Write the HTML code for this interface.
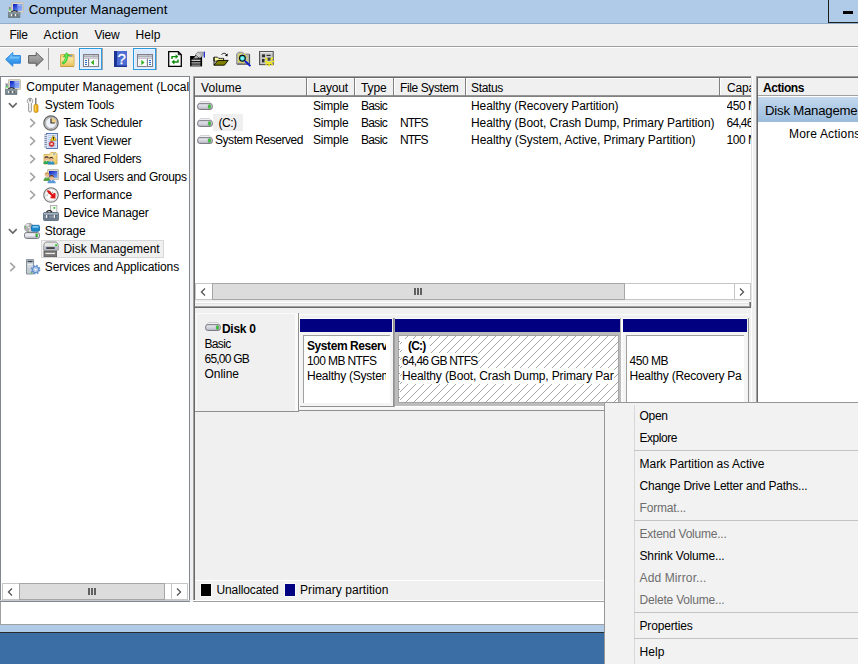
<!DOCTYPE html>
<html><head><meta charset="utf-8"><title>Computer Management</title>
<style>
html,body{margin:0;padding:0}
body{width:858px;height:664px;overflow:hidden;position:relative;background:#f0f0f0;font-family:"Liberation Sans", sans-serif;font-size:12px;color:#000}
.t{margin:0;padding:0}
</style></head><body>
<svg width="0" height="0" style="position:absolute"><defs>
<linearGradient id="gscr" x1="0" y1="0" x2="1" y2="1"><stop offset="0" stop-color="#0818c0"/><stop offset="1" stop-color="#7fb0ff"/></linearGradient>
<linearGradient id="gback" x1="0" y1="0" x2="0" y2="1"><stop offset="0" stop-color="#6cc3fb"/><stop offset="1" stop-color="#1e7fe0"/></linearGradient>
<linearGradient id="gfwd" x1="0" y1="0" x2="0" y2="1"><stop offset="0" stop-color="#b8b8b8"/><stop offset="1" stop-color="#7c7c7c"/></linearGradient>
<linearGradient id="gfold" x1="0" y1="0" x2="0" y2="1"><stop offset="0" stop-color="#fbe9a8"/><stop offset="1" stop-color="#e8c25a"/></linearGradient>
<linearGradient id="ghelp" x1="0" y1="0" x2="1" y2="0"><stop offset="0" stop-color="#5a7fe0"/><stop offset="1" stop-color="#1c3fb0"/></linearGradient>
<linearGradient id="gdrv" x1="0" y1="0" x2="0" y2="1"><stop offset="0" stop-color="#ececf4"/><stop offset="1" stop-color="#bcbcc8"/></linearGradient>
<linearGradient id="gsel" x1="0" y1="0" x2="0" y2="1"><stop offset="0" stop-color="#c4d9ee"/><stop offset="1" stop-color="#9bbbdd"/></linearGradient>
</defs></svg>
<div style="position:absolute;left:0px;top:0px;width:858px;height:23px;background:#b0cbe8;"></div>
<div style="position:absolute;left:0px;top:23px;width:858px;height:1px;background:#94adc9;"></div>
<svg style="position:absolute;left:8px;top:2px" width="16" height="16" viewBox="0 0 16 16"><rect x="0.5" y="4.5" width="3" height="6" fill="#e4e4e4" stroke="#b8b8c0" stroke-width="0.6"/><rect x="1.2" y="5.2" width="1.4" height="1.6" fill="#505070"/><rect x="0.9" y="7.2" width="2.2" height="1.3" fill="#38d838"/><rect x="3.5" y="0.5" width="12" height="10" rx="0.6" fill="#dcd8c8" stroke="#c0bcac" stroke-width="0.8"/><rect x="5" y="2" width="9.2" height="7" fill="url(#gscr)"/><path d="M8.8 2 L14.2 2 L14.2 9 L10.2 9 Z" fill="#9ab4ff" opacity="0.6"/><path d="M10 2.6 L13.6 2.6 L13.6 4 L10.3 4 Z" fill="#fff" opacity="0.35"/><path d="M3.5 10.2 C4 8.2 9 8.2 9.5 10.2" fill="none" stroke="#181818" stroke-width="1.1"/><rect x="0.3" y="10.2" width="11.7" height="5.5" fill="#6f7f86" stroke="#5a6a70" stroke-width="0.5"/><rect x="0.6" y="10.5" width="11.1" height="1" fill="#9aa8ae"/><rect x="0.6" y="12.6" width="11.1" height="0.9" fill="#93a1a8"/><rect x="3" y="12" width="1.6" height="2.2" fill="#f0f0f0"/><rect x="4.6" y="12" width="0.8" height="2.2" fill="#303030"/><rect x="7" y="12" width="1.6" height="2.2" fill="#f0f0f0"/><rect x="8.6" y="12" width="0.8" height="2.2" fill="#303030"/></svg>
<div style="position:absolute;left:828px;top:0px;width:1px;height:23px;background:#1e1e1e;"></div>
<div style="position:absolute;left:828px;top:22px;width:30px;height:1px;background:#1e1e1e;"></div>
<div style="position:absolute;left:843px;top:11px;width:10px;height:3px;background:#000;"></div>
<div style="position:absolute;left:0px;top:24px;width:858px;height:22px;background:#f0f0f0;"></div>
<div style="position:absolute;left:0px;top:46px;width:858px;height:1px;background:#a0a0a0;"></div>
<div style="position:absolute;left:0px;top:47px;width:858px;height:1px;background:#ffffff;"></div>
<div style="position:absolute;left:0px;top:48px;width:858px;height:28px;background:#f0f0f0;"></div>
<svg style="position:absolute;left:5px;top:51px" width="16" height="16" viewBox="0 0 16 16"><path d="M0.7 8.4 L7.8 1.6 L7.8 4.6 L15.4 4.6 L15.4 12.2 L7.8 12.2 L7.8 15.2 Z" fill="url(#gback)" stroke="#2a86e0" stroke-width="1" stroke-linejoin="round"/><path d="M3 8.4 L7 4.6 L7 6 L14 6 L14 7.6 L4 7.6 Z" fill="#8fd4ff" opacity="0.55"/></svg>
<svg style="position:absolute;left:28px;top:51px" width="16" height="16" viewBox="0 0 16 16"><path d="M15.3 8.4 L8.2 1.6 L8.2 4.6 L0.6 4.6 L0.6 12.2 L8.2 12.2 L8.2 15.2 Z" fill="url(#gfwd)" stroke="#5c5c5c" stroke-width="1" stroke-linejoin="round"/></svg>
<div style="position:absolute;left:48px;top:48px;width:1px;height:22px;background:#a0a0a0;"></div>
<svg style="position:absolute;left:60px;top:52px" width="16" height="16" viewBox="0 0 16 16"><rect x="0.5" y="2.5" width="13.5" height="12" rx="0.8" fill="#f3d077" stroke="#cda646" stroke-width="0.9"/><rect x="1" y="5.6" width="12.5" height="8.6" fill="url(#gfold)"/><rect x="0.5" y="14" width="13.5" height="0.9" fill="#c09a3c"/><rect x="9.8" y="3.3" width="2.6" height="1.2" rx="0.5" fill="#4a8ae8"/><path d="M2 10.6 C4.3 9.6 5.3 7.2 5.2 4.6 L3.3 4.9 L6.4 0.7 L10 4 L7.7 4.2 C7.9 8 5.6 11.4 3 12.2 Z" fill="#3ad43a" stroke="#2cb82c" stroke-width="0.5"/><path d="M6.3 2.2 C6.6 5 6 8 4 10.4" fill="none" stroke="#86f472" stroke-width="0.9"/></svg>
<div style="position:absolute;left:79px;top:48px;width:23px;height:22px;background:#dce9fa;border:1px solid #2a9be0;box-sizing:border-box;box-shadow:inset 0 0 0 1px #e8f1fc"></div>
<div style="position:absolute;left:102px;top:48px;width:1px;height:22px;background:#a8a8a8;"></div>
<svg style="position:absolute;left:83px;top:54px" width="16" height="13" viewBox="0 0 16 13"><rect x="0.5" y="0.5" width="15" height="12" fill="#fff" stroke="#80808a"/><rect x="1" y="1" width="14" height="3.6" fill="#9a9aa4"/><rect x="1.2" y="1.4" width="9.5" height="0.9" fill="#e4e4ea"/><rect x="11.6" y="1.3" width="1.1" height="1.1" fill="#fff"/><rect x="13.4" y="1.3" width="1.1" height="1.1" fill="#fff"/><rect x="1" y="3.2" width="14" height="0.9" fill="#e0e0e6"/><rect x="5" y="4.6" width="1" height="7.9" fill="#80808a"/><rect x="6" y="4.6" width="0.6" height="7.9" fill="#d8d8e0"/><rect x="2" y="5.9" width="2" height="1.1" fill="#2f6fd0"/><rect x="2" y="7.9" width="2" height="1.1" fill="#2f6fd0"/><rect x="2" y="9.9" width="2" height="1.1" fill="#2f6fd0"/><path d="M11 5.7 L11 11.3 L7.8 8.5 Z" fill="#34b020"/><rect x="12.5" y="5" width="2" height="7" fill="#f0f0f0"/></svg>
<svg style="position:absolute;left:114px;top:51px" width="13" height="16" viewBox="0 0 13 16"><rect x="0" y="0" width="13" height="16" fill="#4c6cd4"/><rect x="0" y="0" width="3" height="16" fill="#1c3494"/><rect x="0" y="14.5" width="13" height="1.5" fill="#1c3494"/><text x="7.6" y="13.2" text-anchor="middle" font-family="Liberation Sans, sans-serif" font-size="15" fill="#fff" stroke="#fff" stroke-width="0.3">?</text></svg>
<div style="position:absolute;left:133px;top:48px;width:23px;height:22px;background:#dce9fa;border:1px solid #2a9be0;box-sizing:border-box;box-shadow:inset 0 0 0 1px #e8f1fc"></div>
<div style="position:absolute;left:156px;top:48px;width:1px;height:22px;background:#a8a8a8;"></div>
<svg style="position:absolute;left:137px;top:54px" width="16" height="13" viewBox="0 0 16 13"><rect x="0.5" y="0.5" width="15" height="12" fill="#fff" stroke="#80808a"/><rect x="1" y="1" width="14" height="3.6" fill="#9a9aa4"/><rect x="1.2" y="1.4" width="9.5" height="0.9" fill="#e4e4ea"/><rect x="11.6" y="1.3" width="1.1" height="1.1" fill="#fff"/><rect x="13.4" y="1.3" width="1.1" height="1.1" fill="#fff"/><rect x="1" y="3.2" width="14" height="0.9" fill="#e0e0e6"/><rect x="10" y="4.6" width="1" height="7.9" fill="#80808a"/><rect x="9.4" y="4.6" width="0.6" height="7.9" fill="#d8d8e0"/><rect x="12" y="5.9" width="2" height="1.1" fill="#2f6fd0"/><rect x="12" y="7.9" width="2" height="1.1" fill="#2f6fd0"/><rect x="12" y="9.9" width="2" height="1.1" fill="#2f6fd0"/><path d="M4.3 5.7 L4.3 11.3 L7.5 8.5 Z" fill="#34b020"/><rect x="1.5" y="5" width="2" height="7" fill="#f0f0f0"/></svg>
<svg style="position:absolute;left:168px;top:51px" width="14" height="16" viewBox="0 0 14 16"><path d="M0.7 0.7 L10.3 0.7 L13.3 3.7 L13.3 15.3 L0.7 15.3 Z" fill="#fff" stroke="#000" stroke-width="1.3"/><path d="M10.3 0.7 L10.3 3.7 L13.3 3.7" fill="none" stroke="#000" stroke-width="1"/><path d="M4 8 L4 5.6 L8 5.6" fill="none" stroke="#0a8a0a" stroke-width="1.4"/><path d="M7.6 3.2 L10.4 5.6 L7.6 8 Z" fill="#0a8a0a"/><path d="M10 8.6 L10 11 L6 11" fill="none" stroke="#0a8a0a" stroke-width="1.4"/><path d="M6.4 8.6 L3.6 11 L6.4 13.4 Z" fill="#0a8a0a"/></svg>
<svg style="position:absolute;left:189px;top:51px" width="17" height="16" viewBox="0 0 16 16"><rect x="0.6" y="5" width="12" height="10.4" fill="#000"/><rect x="2" y="8.6" width="9" height="1.5" fill="#c8c8c8"/><rect x="2" y="11.3" width="9" height="1.2" fill="#c8c8c8"/><rect x="2" y="13.6" width="9" height="1" fill="#c8c8c8"/><path d="M3.5 7.6 L7 3.4 L9.4 7.2" fill="#b0b0b0" stroke="#000" stroke-width="0.8"/><path d="M6 3.4 L8.2 1.2 L13.6 1.2 L13.6 4.6 L10.4 7.2 Z" fill="#b4b4b4" stroke="#6a6a6a" stroke-width="0.6"/><path d="M7 3 L9.6 6.4 M8.2 2 L10.8 5.4" stroke="#fff" stroke-width="0.7"/><rect x="14.2" y="0.6" width="1.2" height="6" fill="#1020c8"/></svg>
<svg style="position:absolute;left:213px;top:51px" width="16" height="16" viewBox="0 0 16 16"><path d="M1 6.2 L4.6 6.2 L5.6 7.4 L10.6 7.4 L10.6 10 L1 10 Z" fill="#ffff66" stroke="#000" stroke-width="0.9"/><path d="M1.8 7.2h1M3.8 7.2h1M2.8 8.2h1M4.8 8.2h1M6.8 8.2h1M8.8 8.2h1M1.8 9.2h1M3.8 9.2h1M5.8 9.2h1" stroke="#fff" stroke-width="0.9"/><path d="M1 6.2 L1 14.2 L11.4 14.2 L15.2 9.4 L4.8 9.4 L1 14.2" fill="#808000" stroke="#000" stroke-width="0.9" stroke-linejoin="round"/><path d="M8.6 3.6 C10 1.8 12.4 1.8 13.8 4" fill="none" stroke="#000" stroke-width="0.9"/><path d="M14.8 2.4 L14.4 5.6 L11.8 4.6 Z" fill="#000"/></svg>
<svg style="position:absolute;left:236px;top:51px" width="16" height="16" viewBox="0 0 16 16"><path d="M0.6 3 L2.4 1.2 L6.6 1.2 L8.4 3 L13.4 3 L13.4 13 L0.6 13 Z" fill="#b4b4b4" stroke="#7a7a7a" stroke-width="0.7"/><path d="M1 13.2 L13.6 13.2 L13.6 3.4" fill="none" stroke="#505050" stroke-width="1"/><path d="M2 3.4h1.2M4.4 2.6h1.2M2 5.8h1.2M2 8.2h1.2M2 10.6h1.2M4.4 11.4h1.2M6.8 11.8h1.2M9.6 5h1.2M10.8 7h1.2M10.4 9.4h1.2M8 3.4h1.2M3.2 4.6h1M3 9.4h1M9 10.6h1" stroke="#f8f020" stroke-width="1.1"/><circle cx="6.4" cy="7.3" r="2.9" fill="#30e8e8" stroke="#101010" stroke-width="1.1"/><circle cx="6.4" cy="7.3" r="1.5" fill="#90f4f4"/><path d="M9 9.8 L14.4 15.2" stroke="#0818d0" stroke-width="1.9"/></svg>
<svg style="position:absolute;left:259px;top:51px" width="16" height="16" viewBox="0 0 16 16"><rect x="0.6" y="0.6" width="13.6" height="13" fill="#c8c8c8" stroke="#505050" stroke-width="1.1"/><rect x="1.2" y="1.2" width="12.4" height="1" fill="#f0f0f0"/><rect x="3" y="3.4" width="3" height="2.8" fill="#303030"/><rect x="7.6" y="3.8" width="4" height="1.2" fill="#303030"/><rect x="3" y="8" width="2.6" height="3.4" fill="#303030"/><rect x="8.4" y="6.6" width="3.2" height="3" fill="#404040"/><path d="M6.2 6.8 L8.4 8.6 M13.8 6.6 L11.8 8.8 M5.6 10.6 L8.2 10.4 M15.4 10.6 L12.4 10.4 M6.6 13.8 L8.8 11.8 M13.6 14 L11.6 11.8 M10 15.6 L10.1 12.4" stroke="#f4ec10" stroke-width="1.5"/><path d="M8 10.6 L9.2 12 L10.2 11.2 L11.2 12 L12.4 10.6" fill="none" stroke="#f4ec10" stroke-width="1.2"/></svg>
<div style="position:absolute;left:0px;top:76px;width:190px;height:526px;background:#fff;border:1px solid #828790;box-sizing:border-box"></div>
<svg style="position:absolute;left:5px;top:79px" width="16" height="16" viewBox="0 0 16 16"><rect x="0.5" y="4.5" width="3" height="6" fill="#e4e4e4" stroke="#b8b8c0" stroke-width="0.6"/><rect x="1.2" y="5.2" width="1.4" height="1.6" fill="#505070"/><rect x="0.9" y="7.2" width="2.2" height="1.3" fill="#38d838"/><rect x="3.5" y="0.5" width="12" height="10" rx="0.6" fill="#dcd8c8" stroke="#c0bcac" stroke-width="0.8"/><rect x="5" y="2" width="9.2" height="7" fill="url(#gscr)"/><path d="M8.8 2 L14.2 2 L14.2 9 L10.2 9 Z" fill="#9ab4ff" opacity="0.6"/><path d="M10 2.6 L13.6 2.6 L13.6 4 L10.3 4 Z" fill="#fff" opacity="0.35"/><path d="M3.5 10.2 C4 8.2 9 8.2 9.5 10.2" fill="none" stroke="#181818" stroke-width="1.1"/><rect x="0.3" y="10.2" width="11.7" height="5.5" fill="#6f7f86" stroke="#5a6a70" stroke-width="0.5"/><rect x="0.6" y="10.5" width="11.1" height="1" fill="#9aa8ae"/><rect x="0.6" y="12.6" width="11.1" height="0.9" fill="#93a1a8"/><rect x="3" y="12" width="1.6" height="2.2" fill="#f0f0f0"/><rect x="4.6" y="12" width="0.8" height="2.2" fill="#303030"/><rect x="7" y="12" width="1.6" height="2.2" fill="#f0f0f0"/><rect x="8.6" y="12" width="0.8" height="2.2" fill="#303030"/></svg>
<svg style="position:absolute;left:8px;top:102px" width="10" height="7" viewBox="0 0 10 7"><path d="M0.9 1.1 L4.8 5 L8.7 1.1" fill="none" stroke="#666666" stroke-width="1.6"/></svg>
<svg style="position:absolute;left:25px;top:97px" width="16" height="16" viewBox="0 0 16 16"><path d="M4.6 1.2 C2 1.8 1.6 5.2 3.6 6.6 L3.6 14 C3.6 15.4 6.4 15.4 6.4 14 L6.4 6.6 C8.4 5.2 8 1.8 5.6 1.2 L5.6 4.2 L4.6 4.2 Z" fill="#f4f4f4" stroke="#8c8c8c" stroke-width="0.9"/><rect x="10.2" y="0.8" width="1.2" height="7" fill="#606060"/><rect x="9" y="7.4" width="4" height="8" rx="1.4" fill="#f2b21a" stroke="#b87c00" stroke-width="0.7"/><rect x="9.8" y="8.2" width="1" height="6" fill="#ffd86a"/></svg>
<svg style="position:absolute;left:29px;top:118px" width="7" height="10" viewBox="0 0 7 10"><path d="M1.2 0.9 L5.6 5 L1.2 9.1" fill="none" stroke="#a3a3a3" stroke-width="1.6"/></svg>
<svg style="position:absolute;left:43px;top:115px" width="16" height="16" viewBox="0 0 16 16"><circle cx="8" cy="8" r="7.2" fill="#c4c4c4" stroke="#666666" stroke-width="1.2"/><circle cx="8" cy="8" r="5.5" fill="#eef2f8" stroke="#9a9a9a" stroke-width="0.7"/><path d="M8 8 L8 2.7 A5.3 5.3 0 0 1 13.3 8 Z" fill="#f0cf88"/><path d="M8 3.6 L8 8.4 M7.6 8 L11.8 8" fill="none" stroke="#303030" stroke-width="1.2"/></svg>
<svg style="position:absolute;left:29px;top:136px" width="7" height="10" viewBox="0 0 7 10"><path d="M1.2 0.9 L5.6 5 L1.2 9.1" fill="none" stroke="#a3a3a3" stroke-width="1.6"/></svg>
<svg style="position:absolute;left:43px;top:133px" width="16" height="16" viewBox="0 0 16 16"><rect x="3.5" y="0.5" width="11" height="15" fill="#dbe6fa" stroke="#4a6ab0" stroke-width="0.9"/><path d="M5 2.5h8M5 4.5h8M5 6.5h8M5 8.5h8M5 10.5h8M5 12.5h8M5 14h8" stroke="#a4b8e0" stroke-width="0.6"/><rect x="1.4" y="1.2" width="2.6" height="13.6" fill="#8090b0"/><path d="M1 2.5h3.4M1 4.5h3.4M1 6.5h3.4M1 8.5h3.4M1 10.5h3.4M1 12.5h3.4M1 14h3.4" stroke="#e8ecf4" stroke-width="0.8"/><path d="M10.4 2.4 L13.4 7.4 L7.4 7.4 Z" fill="#ffd820" stroke="#a08000" stroke-width="0.6"/><rect x="9.95" y="4" width="0.9" height="1.8" fill="#000"/><rect x="9.95" y="6.2" width="0.9" height="0.7" fill="#000"/><circle cx="8.6" cy="11" r="2.5" fill="#e03030" stroke="#a01818" stroke-width="0.5"/><path d="M7.5 9.9l2.2 2.2M9.7 9.9l-2.2 2.2" stroke="#fff" stroke-width="0.9"/></svg>
<svg style="position:absolute;left:29px;top:154px" width="7" height="10" viewBox="0 0 7 10"><path d="M1.2 0.9 L5.6 5 L1.2 9.1" fill="none" stroke="#a3a3a3" stroke-width="1.6"/></svg>
<svg style="position:absolute;left:43px;top:151px" width="16" height="16" viewBox="0 0 16 16"><path d="M1 3.5 L6.4 3.5 L7.8 1.6 L13 1.6 L14 2.6 L14 13 L1 13 Z" fill="url(#gfold)" stroke="#d2ae50" stroke-width="0.9"/><rect x="10" y="2.4" width="2.4" height="1" rx="0.4" fill="#5a96ec"/><path d="M0.3999999999999999 13.0 C0.3999999999999999 8.200000000000001 6.800000000000001 8.200000000000001 6.800000000000001 13.0 Z" fill="#2ea45c"/><path d="M2.6 9.0 L3.6 11.0 L4.6 9.0 Z" fill="#fff"/><circle cx="3.6" cy="7.2" r="2.2" fill="#e8b890"/><path d="M1.4 7.5 A2.2 2.2 0 0 1 5.800000000000001 7.5 C4.48 6.1 2.7199999999999998 6.1 1.4 7.5 Z" fill="#2a2218"/><path d="M4.799999999999999 13.4 C4.799999999999999 8.8 11.6 8.8 11.6 13.4 Z" fill="#2e90c4"/><path d="M7.199999999999999 9.6 L8.2 11.6 L9.2 9.6 Z" fill="#fff"/><circle cx="8.2" cy="7.8" r="2.2" fill="#e8b890"/><path d="M5.999999999999999 8.1 A2.2 2.2 0 0 1 10.399999999999999 8.1 C9.08 6.699999999999999 7.319999999999999 6.699999999999999 5.999999999999999 8.1 Z" fill="#2a2218"/></svg>
<svg style="position:absolute;left:29px;top:172px" width="7" height="10" viewBox="0 0 7 10"><path d="M1.2 0.9 L5.6 5 L1.2 9.1" fill="none" stroke="#a3a3a3" stroke-width="1.6"/></svg>
<svg style="position:absolute;left:43px;top:169px" width="16" height="16" viewBox="0 0 16 16"><rect x="4.5" y="0.5" width="11" height="10" rx="0.6" fill="#dcd8c8" stroke="#b4b0a0" stroke-width="0.8"/><rect x="6" y="2" width="8.4" height="7" fill="url(#gscr)"/><path d="M0.5 11.899999999999999 C0.5 6.699999999999999 7.5 6.699999999999999 7.5 11.899999999999999 Z" fill="#58a448"/><path d="M3 7.499999999999999 L4 9.5 L5 7.499999999999999 Z" fill="#fff"/><circle cx="4" cy="5.6" r="2.3" fill="#e8b890"/><path d="M1.7000000000000002 5.8999999999999995 A2.3 2.3 0 0 1 6.3 5.8999999999999995 C4.92 4.449999999999999 3.08 4.449999999999999 1.7000000000000002 5.8999999999999995 Z" fill="#c8a048"/><path d="M4.3999999999999995 14.299999999999999 C4.3999999999999995 9.5 12.8 9.5 12.8 14.299999999999999 Z" fill="#5a98d8"/><path d="M7.6 10.299999999999999 L8.6 12.299999999999999 L9.6 10.299999999999999 Z" fill="#fff"/><circle cx="8.6" cy="8.2" r="2.5" fill="#e8b890"/><path d="M6.1 8.5 A2.5 2.5 0 0 1 11.1 8.5 C9.6 6.949999999999999 7.6 6.949999999999999 6.1 8.5 Z" fill="#4a3424"/></svg>
<svg style="position:absolute;left:29px;top:190px" width="7" height="10" viewBox="0 0 7 10"><path d="M1.2 0.9 L5.6 5 L1.2 9.1" fill="none" stroke="#a3a3a3" stroke-width="1.6"/></svg>
<svg style="position:absolute;left:43px;top:187px" width="16" height="16" viewBox="0 0 16 16"><circle cx="8" cy="8" r="7.2" fill="#fdfdfd" stroke="#7e7e7e" stroke-width="1.3"/><circle cx="8" cy="8" r="5.9" fill="none" stroke="#dcdcdc" stroke-width="0.9"/><path d="M4 8.6 A4.2 4.2 0 0 1 12 7.4" fill="none" stroke="#5a9070" stroke-width="1.2" stroke-dasharray="1 1.3"/><path d="M3.6 3.6 L6 3.2 L10.2 7.6 L10.6 5.8 L12.6 6.4 L12.4 11.6 L7.6 11.2 L7.4 9.4 L9 9.4 L4.6 5.2 Z" fill="#e01414"/></svg>
<svg style="position:absolute;left:43px;top:205px" width="16" height="16" viewBox="0 0 16 16"><rect x="7.5" y="0.5" width="6.4" height="8" fill="#f8f8f8" stroke="#a0a0a0" stroke-width="0.8"/><rect x="10.4" y="2" width="1.8" height="1.8" fill="#38c838"/><path d="M3.6 7.6 C4 5 8.6 5 9 7.6" fill="none" stroke="#202020" stroke-width="1.3"/><rect x="0.5" y="7.5" width="15" height="8" rx="1" fill="#6c7c8c" stroke="#556474" stroke-width="0.8"/><rect x="1" y="8" width="14" height="1.6" fill="#a4b4c2"/><rect x="1" y="11.4" width="14" height="1" fill="#8c9cac"/><rect x="3" y="10" width="1.6" height="3" fill="#f0f0f0"/><rect x="4.6" y="10" width="0.8" height="3" fill="#303840"/><rect x="10.8" y="10" width="1.6" height="3" fill="#f0f0f0"/><rect x="12.4" y="10" width="0.8" height="3" fill="#303840"/></svg>
<svg style="position:absolute;left:8px;top:228px" width="10" height="7" viewBox="0 0 10 7"><path d="M0.9 1.1 L4.8 5 L8.7 1.1" fill="none" stroke="#666666" stroke-width="1.6"/></svg>
<svg style="position:absolute;left:24px;top:223px" width="16" height="16" viewBox="0 0 16 16"><ellipse cx="5" cy="4.6" rx="4.6" ry="4.2" fill="#b4b4b4" stroke="#8a8a8a" stroke-width="0.8"/><path d="M5 4.6 L1.2 2.4 A4.6 4.2 0 0 1 5 0.4 Z" fill="#e4e4e4"/><path d="M5 4.6 L8.8 6.8 A4.6 4.2 0 0 1 5 8.8 Z" fill="#d8d8d8"/><circle cx="5" cy="4.6" r="1.3" fill="#f4f4f4" stroke="#808080" stroke-width="0.5"/><rect x="1" y="3" width="1.2" height="1.2" fill="#50c050"/><rect x="7.5" y="2.3" width="8" height="6" rx="1.2" fill="#1c8acc" stroke="#1068a4" stroke-width="0.8"/><rect x="8.6" y="3.1" width="5.8" height="1.6" fill="#8cd0f4"/><rect x="0.6" y="9.6" width="14.8" height="5.8" rx="1.8" fill="#ececf2" stroke="#70707a" stroke-width="1"/><rect x="1.4" y="13.4" width="13.2" height="1.4" rx="0.7" fill="#b8b8c4"/><rect x="11.8" y="10.8" width="1.8" height="3.2" fill="#28c828" stroke="#4a8a4a" stroke-width="0.4"/></svg>
<div style="position:absolute;left:41px;top:240px;width:123px;height:18px;background:#f0f0f0;border:1px solid #d8d8d8;box-sizing:border-box"></div>
<svg style="position:absolute;left:43px;top:241px" width="16" height="16" viewBox="0 0 16 16"><path d="M3.4 1 L12.6 1 C14 1 15.2 3 15.2 5 L15.2 9 L0.8 9 L0.8 5 C0.8 3 2 1 3.4 1 Z" fill="#e6e6e6" stroke="#808080" stroke-width="0.9"/><rect x="1.3" y="5.2" width="13.4" height="3.4" fill="#bcbcbc"/><rect x="4" y="6.4" width="7" height="1.3" fill="#101010"/><rect x="3" y="6.4" width="1" height="1.3" fill="#2040d0"/><rect x="11" y="6.4" width="1" height="1.3" fill="#2040d0"/><rect x="12.2" y="3.2" width="1.8" height="1.8" fill="#28d028"/><rect x="1" y="10" width="12.6" height="5.6" fill="#787878" stroke="#5a5a5a" stroke-width="0.8"/><rect x="2.4" y="11.8" width="9.6" height="1.3" fill="#e8e8e8"/></svg>
<svg style="position:absolute;left:9px;top:262px" width="7" height="10" viewBox="0 0 7 10"><path d="M1.2 0.9 L5.6 5 L1.2 9.1" fill="none" stroke="#a3a3a3" stroke-width="1.6"/></svg>
<svg style="position:absolute;left:25px;top:259px" width="16" height="16" viewBox="0 0 16 16"><path d="M1.5 0.6 L8.6 0.6 L8.6 15 L1.5 15 Z" fill="#c4ccd4" stroke="#7c8690" stroke-width="0.9"/><rect x="2.6" y="1.8" width="5" height="1.4" fill="#38424c"/><rect x="2.4" y="4.8" width="5.4" height="1.6" fill="#e8ecf0"/><rect x="2.4" y="7.4" width="5.4" height="0.9" fill="#e0e4e8"/><rect x="5.8" y="13" width="1.6" height="1.2" fill="#48c848"/><circle cx="10.6" cy="10.6" r="3.7" fill="#e8f0fa" stroke="#6490cc" stroke-width="2.2" stroke-dasharray="1.55 1.36"/><circle cx="10.6" cy="10.6" r="3" fill="#dce8f8" stroke="#6490cc" stroke-width="1.3"/><circle cx="10.6" cy="10.6" r="1.3" fill="#fff" stroke="#6490cc" stroke-width="0.5"/></svg>
<div style="position:absolute;left:2px;top:583px;width:186px;height:17px;background:#fff;border:1px solid #c6c6c6;box-sizing:border-box"></div>
<div style="position:absolute;left:19px;top:583px;width:146px;height:17px;background:#dcdcdc;border:1px solid #a6a6a6;box-sizing:border-box"></div>
<div style="position:absolute;left:171px;top:583px;width:1px;height:17px;background:#c6c6c6;"></div>
<svg style="position:absolute;left:7px;top:586.5px" width="7" height="10" viewBox="0 0 7 10"><path d="M5 1.5 L1.4 5 L5 8.5" fill="none" stroke="#505050" stroke-width="1.2"/></svg>
<svg style="position:absolute;left:175.4px;top:586.5px" width="7" height="10" viewBox="0 0 7 10"><path d="M2 1.5 L5.6 5 L2 8.5" fill="none" stroke="#505050" stroke-width="1.2"/></svg>
<div style="position:absolute;left:88px;top:588px;width:2px;height:7px;background:#606060;"></div>
<div style="position:absolute;left:91px;top:588px;width:2px;height:7px;background:#606060;"></div>
<div style="position:absolute;left:94px;top:588px;width:2px;height:7px;background:#606060;"></div>
<div style="position:absolute;left:193px;top:76px;width:560px;height:230px;background:#fff;"></div>
<div style="position:absolute;left:193px;top:76px;width:558px;height:1px;background:#a0a0a0;"></div>
<div style="position:absolute;left:193px;top:76px;width:1px;height:232px;background:#a0a0a0;"></div>
<div style="position:absolute;left:194px;top:77px;width:557px;height:1px;background:#696969;"></div>
<div style="position:absolute;left:194px;top:77px;width:1px;height:231px;background:#696969;"></div>
<div style="position:absolute;left:751px;top:76px;width:1px;height:230px;background:#e3e3e3;"></div>
<div style="position:absolute;left:752px;top:76px;width:1px;height:230px;background:#fff;"></div>
<div style="position:absolute;left:195px;top:78px;width:556px;height:19px;background:#f0f0f0;"></div>
<div style="position:absolute;left:195px;top:78px;width:556px;height:1px;background:#fff;"></div>
<div style="position:absolute;left:195px;top:95px;width:556px;height:1px;background:#949494;"></div>
<div style="position:absolute;left:195px;top:96px;width:556px;height:1px;background:#808080;"></div>
<div style="position:absolute;left:306px;top:78px;width:1px;height:18px;background:#808080;"></div>
<div style="position:absolute;left:307px;top:78px;width:1px;height:17px;background:#fff;"></div>
<div style="position:absolute;left:354px;top:78px;width:1px;height:18px;background:#808080;"></div>
<div style="position:absolute;left:355px;top:78px;width:1px;height:17px;background:#fff;"></div>
<div style="position:absolute;left:393px;top:78px;width:1px;height:18px;background:#808080;"></div>
<div style="position:absolute;left:394px;top:78px;width:1px;height:17px;background:#fff;"></div>
<div style="position:absolute;left:465px;top:78px;width:1px;height:18px;background:#808080;"></div>
<div style="position:absolute;left:466px;top:78px;width:1px;height:17px;background:#fff;"></div>
<div style="position:absolute;left:719px;top:78px;width:1px;height:18px;background:#808080;"></div>
<div style="position:absolute;left:720px;top:78px;width:1px;height:17px;background:#fff;"></div>
<svg style="position:absolute;left:197px;top:101px" width="16" height="10" viewBox="0 0 16 10"><path d="M3.6 0.6 L12.4 0.6 L14.6 3 L1.4 3 Z" fill="#f4f4f6" stroke="#b0b0b8" stroke-width="0.6"/><rect x="0.7" y="2.7" width="14.6" height="5.7" rx="2" fill="url(#gdrv)" stroke="#74747e" stroke-width="1"/><rect x="11.3" y="3.8" width="2.3" height="3.5" rx="0.5" fill="#2ed02e" stroke="#4a8a4a" stroke-width="0.5"/></svg>
<svg style="position:absolute;left:197px;top:118px" width="16" height="10" viewBox="0 0 16 10"><path d="M3.6 0.6 L12.4 0.6 L14.6 3 L1.4 3 Z" fill="#f4f4f6" stroke="#b0b0b8" stroke-width="0.6"/><rect x="0.7" y="2.7" width="14.6" height="5.7" rx="2" fill="url(#gdrv)" stroke="#74747e" stroke-width="1"/><rect x="11.3" y="3.8" width="2.3" height="3.5" rx="0.5" fill="#2ed02e" stroke="#4a8a4a" stroke-width="0.5"/></svg>
<div style="position:absolute;left:213px;top:114px;width:30px;height:17px;background:#efefef;"></div>
<svg style="position:absolute;left:197px;top:135px" width="16" height="10" viewBox="0 0 16 10"><path d="M3.6 0.6 L12.4 0.6 L14.6 3 L1.4 3 Z" fill="#f4f4f6" stroke="#b0b0b8" stroke-width="0.6"/><rect x="0.7" y="2.7" width="14.6" height="5.7" rx="2" fill="url(#gdrv)" stroke="#74747e" stroke-width="1"/><rect x="11.3" y="3.8" width="2.3" height="3.5" rx="0.5" fill="#2ed02e" stroke="#4a8a4a" stroke-width="0.5"/></svg>
<div style="position:absolute;left:195px;top:283px;width:556px;height:17px;background:#fff;border:1px solid #c6c6c6;box-sizing:border-box"></div>
<div style="position:absolute;left:212px;top:283px;width:413px;height:17px;background:#dcdcdc;border:1px solid #a6a6a6;box-sizing:border-box"></div>
<div style="position:absolute;left:734px;top:283px;width:1px;height:17px;background:#c6c6c6;"></div>
<svg style="position:absolute;left:200px;top:286.5px" width="7" height="10" viewBox="0 0 7 10"><path d="M5 1.5 L1.4 5 L5 8.5" fill="none" stroke="#505050" stroke-width="1.2"/></svg>
<svg style="position:absolute;left:738.4px;top:286.5px" width="7" height="10" viewBox="0 0 7 10"><path d="M2 1.5 L5.6 5 L2 8.5" fill="none" stroke="#505050" stroke-width="1.2"/></svg>
<div style="position:absolute;left:414px;top:288px;width:2px;height:7px;background:#606060;"></div>
<div style="position:absolute;left:417px;top:288px;width:2px;height:7px;background:#606060;"></div>
<div style="position:absolute;left:420px;top:288px;width:2px;height:7px;background:#606060;"></div>
<div style="position:absolute;left:195px;top:300px;width:556px;height:6px;background:#f0f0f0;"></div>
<div style="position:absolute;left:195px;top:302px;width:556px;height:1px;background:#fff;"></div>
<div style="position:absolute;left:195px;top:303px;width:556px;height:1px;background:#e3e3e3;"></div>
<div style="position:absolute;left:195px;top:306px;width:556px;height:1px;background:#a0a0a0;"></div>
<div style="position:absolute;left:195px;top:307px;width:556px;height:1px;background:#696969;"></div>
<div style="position:absolute;left:749px;top:302px;width:1px;height:4px;background:#a0a0a0;"></div>
<div style="position:absolute;left:750px;top:302px;width:1px;height:6px;background:#696969;"></div>
<div style="position:absolute;left:193px;top:308px;width:560px;height:293px;background:#f0f0f0;"></div>
<div style="position:absolute;left:193px;top:308px;width:1px;height:292px;background:#a0a0a0;"></div>
<div style="position:absolute;left:194px;top:308px;width:1px;height:292px;background:#696969;"></div>
<div style="position:absolute;left:751px;top:308px;width:1px;height:292px;background:#fff;"></div>
<div style="position:absolute;left:298px;top:313px;width:1px;height:99px;background:#909090;"></div>
<div style="position:absolute;left:195px;top:411px;width:104px;height:1px;background:#909090;"></div>
<div style="position:absolute;left:295px;top:313px;width:3px;height:98px;background:#fafafa;"></div>
<div style="position:absolute;left:196px;top:313px;width:99px;height:1px;background:#fafafa;"></div>
<div style="position:absolute;left:196px;top:313px;width:1px;height:98px;background:#fafafa;"></div>
<div style="position:absolute;left:299px;top:314px;width:450px;height:1px;background:#fcfcfc;"></div>
<div style="position:absolute;left:299px;top:314px;width:1px;height:96px;background:#fcfcfc;"></div>
<div style="position:absolute;left:299px;top:410px;width:452px;height:1px;background:#909090;"></div>
<div style="position:absolute;left:299px;top:407px;width:450px;height:3px;background:#f6f6f6;"></div>
<svg style="position:absolute;left:205px;top:322px" width="16" height="10" viewBox="0 0 16 10"><path d="M3.6 0.6 L12.4 0.6 L14.6 3 L1.4 3 Z" fill="#f4f4f6" stroke="#b0b0b8" stroke-width="0.6"/><rect x="0.7" y="2.7" width="14.6" height="5.7" rx="2" fill="url(#gdrv)" stroke="#74747e" stroke-width="1"/><rect x="11.3" y="3.8" width="2.3" height="3.5" rx="0.5" fill="#2ed02e" stroke="#4a8a4a" stroke-width="0.5"/></svg>
<div style="position:absolute;left:300px;top:318px;width:92px;height:1px;background:#fafafa;"></div>
<div style="position:absolute;left:300px;top:319px;width:92px;height:13px;background:#000080;"></div>
<div style="position:absolute;left:393px;top:318px;width:1px;height:89px;background:#909090;"></div>
<div style="position:absolute;left:300px;top:332px;width:93px;height:74px;background:#f4f4f4;"></div>
<div style="position:absolute;left:303px;top:335px;width:87px;height:68px;background:#fff;border-top:1px solid #a0a0a0;border-left:1px solid #a0a0a0;box-sizing:border-box"></div>
<div style="position:absolute;left:300px;top:406px;width:94px;height:1px;background:#909090;"></div>
<div style="position:absolute;left:395px;top:318px;width:225px;height:1px;background:#fafafa;"></div>
<div style="position:absolute;left:395px;top:319px;width:225px;height:13px;background:#000080;"></div>
<div style="position:absolute;left:620px;top:318px;width:1px;height:14px;background:#b4b4ac;"></div>
<div style="position:absolute;left:621px;top:318px;width:2px;height:89px;background:#fcfcfc;"></div>
<div style="position:absolute;left:394px;top:318px;width:1px;height:89px;background:#a0a0a0;"></div>
<div style="position:absolute;left:395px;top:332px;width:226px;height:74px;background:#fff;border:solid #bcbcbc;border-width:4px 3px 4px 4px;box-sizing:border-box;background-image:repeating-linear-gradient(135deg,transparent 0,transparent 4.95px,#a6a6a6 4.95px,#a6a6a6 5.66px);background-position:1px 0"></div>
<div style="position:absolute;left:398px;top:335px;width:221px;height:1px;background:#a4a4a4;"></div>
<div style="position:absolute;left:398px;top:335px;width:1px;height:68px;background:#a4a4a4;"></div>
<div style="position:absolute;left:398px;top:402px;width:221px;height:1px;background:#a4a4a4;"></div>
<div style="position:absolute;left:618px;top:335px;width:1px;height:68px;background:#a4a4a4;"></div>
<div style="position:absolute;left:395px;top:406px;width:226px;height:1px;background:#fff;"></div>
<div style="position:absolute;left:623px;top:318px;width:124px;height:1px;background:#fafafa;"></div>
<div style="position:absolute;left:623px;top:319px;width:124px;height:13px;background:#000080;"></div>
<div style="position:absolute;left:748px;top:318px;width:1px;height:89px;background:#909090;"></div>
<div style="position:absolute;left:623px;top:332px;width:125px;height:74px;background:#f4f4f4;"></div>
<div style="position:absolute;left:626px;top:335px;width:118px;height:68px;background:#fff;border-top:1px solid #a0a0a0;border-left:1px solid #a0a0a0;box-sizing:border-box"></div>
<div style="position:absolute;left:623px;top:406px;width:126px;height:1px;background:#909090;"></div>
<div style="position:absolute;left:402px;top:339px;width:28px;height:14px;background:#fff;"></div>
<div style="position:absolute;left:195px;top:580px;width:556px;height:1px;background:#fff;"></div>
<div style="position:absolute;left:201px;top:584px;width:10px;height:12px;background:#000;box-shadow:0 0 0 1px #f8f8f8"></div>
<div style="position:absolute;left:285px;top:584px;width:10px;height:12px;background:#000080;box-shadow:0 0 0 1px #f8f8f8"></div>
<div style="position:absolute;left:756px;top:76px;width:102px;height:525px;background:#fff;"></div>
<div style="position:absolute;left:756px;top:76px;width:102px;height:1px;background:#a0a0a0;"></div>
<div style="position:absolute;left:756px;top:76px;width:1px;height:525px;background:#a0a0a0;"></div>
<div style="position:absolute;left:757px;top:77px;width:101px;height:1px;background:#696969;"></div>
<div style="position:absolute;left:757px;top:77px;width:1px;height:524px;background:#696969;"></div>
<div style="position:absolute;left:758px;top:78px;width:100px;height:17px;background:#f0f0f0;"></div>
<div style="position:absolute;left:758px;top:95px;width:100px;height:1px;background:#a0a0a0;"></div>
<div style="position:absolute;left:758px;top:96px;width:100px;height:1px;background:#fff;"></div>
<div style="position:absolute;left:758px;top:97px;width:100px;height:25px;background:linear-gradient(#c3d8ee,#9cbcdd);"></div>
<div style="position:absolute;left:0px;top:600px;width:858px;height:1px;background:#fff;"></div>
<div style="position:absolute;left:0px;top:601px;width:858px;height:1px;background:#a0a0a0;"></div>
<div style="position:absolute;left:0px;top:600px;width:190px;height:1px;background:#c6c9ce;"></div>
<div style="position:absolute;left:0px;top:601px;width:190px;height:1px;background:#828790;"></div>
<div style="position:absolute;left:190px;top:600px;width:3px;height:2px;background:#f4f4f4;"></div>
<div style="position:absolute;left:0px;top:602px;width:858px;height:22px;background:#fff;"></div>
<div style="position:absolute;left:0px;top:602px;width:1px;height:22px;background:#a0a0a0;"></div>
<div style="position:absolute;left:0px;top:624px;width:858px;height:1px;background:#a0a0a0;"></div>
<div style="position:absolute;left:0px;top:625px;width:858px;height:7px;background:#b0cbe8;"></div>
<div style="position:absolute;left:0px;top:632px;width:858px;height:1px;background:#2b2b2b;"></div>
<div style="position:absolute;left:0px;top:633px;width:858px;height:31px;background:#3a6ea5;"></div>
<div style="position:absolute;left:604px;top:402px;width:254px;height:262px;background:#f2f2f2;border-left:1px solid #979797;border-top:1px solid #979797;box-sizing:border-box"></div>
<div style="position:absolute;left:634px;top:405px;width:1px;height:259px;background:#d7d7d7;"></div>
<div style="position:absolute;left:634px;top:450px;width:224px;height:1px;background:#c4c4c4;"></div>
<div style="position:absolute;left:634px;top:520px;width:224px;height:1px;background:#c4c4c4;"></div>
<div style="position:absolute;left:634px;top:612px;width:224px;height:1px;background:#c4c4c4;"></div>
<div style="position:absolute;left:634px;top:638px;width:224px;height:1px;background:#c4c4c4;"></div>
<div class="t" style="position:absolute;left:28.8px;top:1.04px;font-size:13.3px;line-height:18.62px;white-space:pre;color:#000;letter-spacing:-0.063px">Computer Management</div>
<div class="t" style="position:absolute;left:9.5px;top:27.10px;font-size:12px;line-height:16.80px;white-space:pre;color:#000;letter-spacing:-0.336px">File</div>
<div class="t" style="position:absolute;left:43.5px;top:27.10px;font-size:12px;line-height:16.80px;white-space:pre;color:#000;letter-spacing:0.273px">Action</div>
<div class="t" style="position:absolute;left:94.5px;top:27.10px;font-size:12px;line-height:16.80px;white-space:pre;color:#000;letter-spacing:-0.199px">View</div>
<div class="t" style="position:absolute;left:135.5px;top:27.10px;font-size:12px;line-height:16.80px;white-space:pre;color:#000;letter-spacing:0.078px">Help</div>
<div class="t" style="position:absolute;left:26.3px;top:78.60px;font-size:12px;line-height:16.80px;white-space:pre;color:#000;letter-spacing:0.027px;width:162.29999999999998px;overflow:hidden">Computer Management (Local)</div>
<div class="t" style="position:absolute;left:44.8px;top:96.60px;font-size:12px;line-height:16.80px;white-space:pre;color:#000;letter-spacing:-0.153px">System Tools</div>
<div class="t" style="position:absolute;left:63.4px;top:114.60px;font-size:12px;line-height:16.80px;white-space:pre;color:#000;letter-spacing:-0.232px">Task Scheduler</div>
<div class="t" style="position:absolute;left:63.4px;top:132.60px;font-size:12px;line-height:16.80px;white-space:pre;color:#000;letter-spacing:-0.224px">Event Viewer</div>
<div class="t" style="position:absolute;left:63.4px;top:150.60px;font-size:12px;line-height:16.80px;white-space:pre;color:#000;letter-spacing:-0.303px">Shared Folders</div>
<div class="t" style="position:absolute;left:63.4px;top:168.60px;font-size:12px;line-height:16.80px;white-space:pre;color:#000;letter-spacing:-0.278px">Local Users and Groups</div>
<div class="t" style="position:absolute;left:63.4px;top:186.60px;font-size:12px;line-height:16.80px;white-space:pre;color:#000;letter-spacing:0.009px">Performance</div>
<div class="t" style="position:absolute;left:63.4px;top:204.60px;font-size:12px;line-height:16.80px;white-space:pre;color:#000;letter-spacing:-0.148px">Device Manager</div>
<div class="t" style="position:absolute;left:44.8px;top:222.60px;font-size:12px;line-height:16.80px;white-space:pre;color:#000;letter-spacing:-0.176px">Storage</div>
<div class="t" style="position:absolute;left:63.4px;top:240.60px;font-size:12px;line-height:16.80px;white-space:pre;color:#000;letter-spacing:-0.028px">Disk Management</div>
<div class="t" style="position:absolute;left:44.8px;top:258.60px;font-size:12px;line-height:16.80px;white-space:pre;color:#000;letter-spacing:-0.098px">Services and Applications</div>
<div class="t" style="position:absolute;left:201px;top:80.30px;font-size:12px;line-height:16.80px;white-space:pre;color:#000;letter-spacing:0.078px">Volume</div>
<div class="t" style="position:absolute;left:313px;top:80.30px;font-size:12px;line-height:16.80px;white-space:pre;color:#000;letter-spacing:-0.172px">Layout</div>
<div class="t" style="position:absolute;left:361px;top:80.30px;font-size:12px;line-height:16.80px;white-space:pre;color:#000;letter-spacing:-0.129px">Type</div>
<div class="t" style="position:absolute;left:400px;top:80.30px;font-size:12px;line-height:16.80px;white-space:pre;color:#000;letter-spacing:-0.399px">File System</div>
<div class="t" style="position:absolute;left:471px;top:80.30px;font-size:12px;line-height:16.80px;white-space:pre;color:#000;letter-spacing:-0.339px">Status</div>
<div class="t" style="position:absolute;left:727px;top:80.30px;font-size:12px;line-height:16.80px;white-space:pre;color:#000;letter-spacing:-0.172px;width:24px;overflow:hidden">Capacity</div>
<div class="t" style="position:absolute;left:313px;top:98.10px;font-size:12px;line-height:16.80px;white-space:pre;color:#000;letter-spacing:-0.198px">Simple</div>
<div class="t" style="position:absolute;left:361px;top:98.10px;font-size:12px;line-height:16.80px;white-space:pre;color:#000;letter-spacing:-0.669px">Basic</div>
<div class="t" style="position:absolute;left:471px;top:98.10px;font-size:12px;line-height:16.80px;white-space:pre;color:#000;letter-spacing:-0.095px">Healthy (Recovery Partition)</div>
<div class="t" style="position:absolute;left:726.5px;top:98.10px;font-size:12px;line-height:16.80px;white-space:pre;color:#000;letter-spacing:-0.477px;width:24.5px;overflow:hidden">450 MB</div>
<div class="t" style="position:absolute;left:218.5px;top:115.10px;font-size:12px;line-height:16.80px;white-space:pre;color:#000;letter-spacing:-0.500px">(C:)</div>
<div class="t" style="position:absolute;left:313px;top:115.10px;font-size:12px;line-height:16.80px;white-space:pre;color:#000;letter-spacing:-0.198px">Simple</div>
<div class="t" style="position:absolute;left:361px;top:115.10px;font-size:12px;line-height:16.80px;white-space:pre;color:#000;letter-spacing:-0.669px">Basic</div>
<div class="t" style="position:absolute;left:400px;top:115.10px;font-size:12px;line-height:16.80px;white-space:pre;color:#000;letter-spacing:-0.961px">NTFS</div>
<div class="t" style="position:absolute;left:471px;top:115.10px;font-size:12px;line-height:16.80px;white-space:pre;color:#000;letter-spacing:-0.057px">Healthy (Boot, Crash Dump, Primary Partition)</div>
<div class="t" style="position:absolute;left:726.5px;top:115.10px;font-size:12px;line-height:16.80px;white-space:pre;color:#000;letter-spacing:-0.775px;width:24.5px;overflow:hidden">64,46 GB</div>
<div class="t" style="position:absolute;left:215px;top:132.10px;font-size:12px;line-height:16.80px;white-space:pre;color:#000;letter-spacing:-0.447px">System Reserved</div>
<div class="t" style="position:absolute;left:313px;top:132.10px;font-size:12px;line-height:16.80px;white-space:pre;color:#000;letter-spacing:-0.198px">Simple</div>
<div class="t" style="position:absolute;left:361px;top:132.10px;font-size:12px;line-height:16.80px;white-space:pre;color:#000;letter-spacing:-0.669px">Basic</div>
<div class="t" style="position:absolute;left:400px;top:132.10px;font-size:12px;line-height:16.80px;white-space:pre;color:#000;letter-spacing:-0.961px">NTFS</div>
<div class="t" style="position:absolute;left:471px;top:132.10px;font-size:12px;line-height:16.80px;white-space:pre;color:#000;letter-spacing:-0.036px">Healthy (System, Active, Primary Partition)</div>
<div class="t" style="position:absolute;left:726.5px;top:132.10px;font-size:12px;line-height:16.80px;white-space:pre;color:#000;letter-spacing:-0.477px;width:24.5px;overflow:hidden">100 MB</div>
<div class="t" style="position:absolute;left:222px;top:320.60px;font-size:12px;line-height:16.80px;white-space:pre;color:#000;font-weight:bold;letter-spacing:-0.310px">Disk 0</div>
<div class="t" style="position:absolute;left:204.5px;top:335.60px;font-size:12px;line-height:16.80px;white-space:pre;color:#000;letter-spacing:-0.669px">Basic</div>
<div class="t" style="position:absolute;left:204.5px;top:350.60px;font-size:12px;line-height:16.80px;white-space:pre;color:#000;letter-spacing:-0.775px">65,00 GB</div>
<div class="t" style="position:absolute;left:204.5px;top:365.60px;font-size:12px;line-height:16.80px;white-space:pre;color:#000;letter-spacing:-0.031px">Online</div>
<div class="t" style="position:absolute;left:307px;top:337.60px;font-size:12px;line-height:16.80px;white-space:pre;color:#000;font-weight:bold;letter-spacing:-0.424px;width:79px;overflow:hidden">System Reserved</div>
<div class="t" style="position:absolute;left:307px;top:352.60px;font-size:12px;line-height:16.80px;white-space:pre;color:#000;letter-spacing:-0.594px">100 MB NTFS</div>
<div class="t" style="position:absolute;left:307px;top:367.60px;font-size:12px;line-height:16.80px;white-space:pre;color:#000;letter-spacing:-0.245px;width:79px;overflow:hidden">Healthy (System, Active, Primary Partition)</div>
<div class="t" style="position:absolute;left:408px;top:337.60px;font-size:12px;line-height:16.80px;white-space:pre;color:#000;font-weight:bold;letter-spacing:-0.789px">(C:)</div>
<div class="t" style="position:absolute;left:402px;top:352.60px;font-size:12px;line-height:16.80px;white-space:pre;color:#000;letter-spacing:-0.760px;background:#fff">64,46 GB NTFS</div>
<div class="t" style="position:absolute;left:402px;top:367.60px;font-size:12px;line-height:16.80px;white-space:pre;color:#000;letter-spacing:-0.138px;width:212.29999999999995px;overflow:hidden;background:#fff">Healthy (Boot, Crash Dump, Primary Partition)</div>
<div class="t" style="position:absolute;left:629.5px;top:352.60px;font-size:12px;line-height:16.80px;white-space:pre;color:#000;letter-spacing:-0.477px">450 MB</div>
<div class="t" style="position:absolute;left:629.5px;top:367.60px;font-size:12px;line-height:16.80px;white-space:pre;color:#000;letter-spacing:-0.236px;width:112.5px;overflow:hidden">Healthy (Recovery Partition)</div>
<div class="t" style="position:absolute;left:216.5px;top:581.60px;font-size:12px;line-height:16.80px;white-space:pre;color:#000;letter-spacing:-0.125px">Unallocated</div>
<div class="t" style="position:absolute;left:300px;top:581.60px;font-size:12px;line-height:16.80px;white-space:pre;color:#000;letter-spacing:0.067px">Primary partition</div>
<div class="t" style="position:absolute;left:763px;top:80.10px;font-size:12px;line-height:16.80px;white-space:pre;color:#000;font-weight:bold;letter-spacing:-0.431px">Actions</div>
<div class="t" style="position:absolute;left:765px;top:101.76px;font-size:13.2px;line-height:18.48px;white-space:pre;color:#000;letter-spacing:-0.219px;width:93px;overflow:hidden">Disk Management</div>
<div class="t" style="position:absolute;left:789px;top:126.10px;font-size:12px;line-height:16.80px;white-space:pre;color:#000;letter-spacing:0.177px;width:69px;overflow:hidden">More Actions</div>
<div class="t" style="position:absolute;left:639.5px;top:407.60px;font-size:12px;line-height:16.80px;white-space:pre;color:#000;letter-spacing:-0.290px">Open</div>
<div class="t" style="position:absolute;left:639.5px;top:429.60px;font-size:12px;line-height:16.80px;white-space:pre;color:#000;letter-spacing:-0.455px">Explore</div>
<div class="t" style="position:absolute;left:639.5px;top:455.60px;font-size:12px;line-height:16.80px;white-space:pre;color:#000;letter-spacing:-0.016px">Mark Partition as Active</div>
<div class="t" style="position:absolute;left:639.5px;top:477.60px;font-size:12px;line-height:16.80px;white-space:pre;color:#000;letter-spacing:-0.212px">Change Drive Letter and Paths...</div>
<div class="t" style="position:absolute;left:639.5px;top:499.60px;font-size:12px;line-height:16.80px;white-space:pre;color:#6d6d6d;letter-spacing:-0.168px">Format...</div>
<div class="t" style="position:absolute;left:639.5px;top:525.60px;font-size:12px;line-height:16.80px;white-space:pre;color:#6d6d6d;letter-spacing:-0.233px">Extend Volume...</div>
<div class="t" style="position:absolute;left:639.5px;top:547.60px;font-size:12px;line-height:16.80px;white-space:pre;color:#000;letter-spacing:-0.148px">Shrink Volume...</div>
<div class="t" style="position:absolute;left:639.5px;top:569.60px;font-size:12px;line-height:16.80px;white-space:pre;color:#6d6d6d;letter-spacing:0.126px">Add Mirror...</div>
<div class="t" style="position:absolute;left:639.5px;top:591.60px;font-size:12px;line-height:16.80px;white-space:pre;color:#6d6d6d;letter-spacing:-0.191px">Delete Volume...</div>
<div class="t" style="position:absolute;left:639.5px;top:617.60px;font-size:12px;line-height:16.80px;white-space:pre;color:#000;letter-spacing:-0.170px">Properties</div>
<div class="t" style="position:absolute;left:639.5px;top:643.60px;font-size:12px;line-height:16.80px;white-space:pre;color:#000;letter-spacing:0.078px">Help</div>
</body></html>
